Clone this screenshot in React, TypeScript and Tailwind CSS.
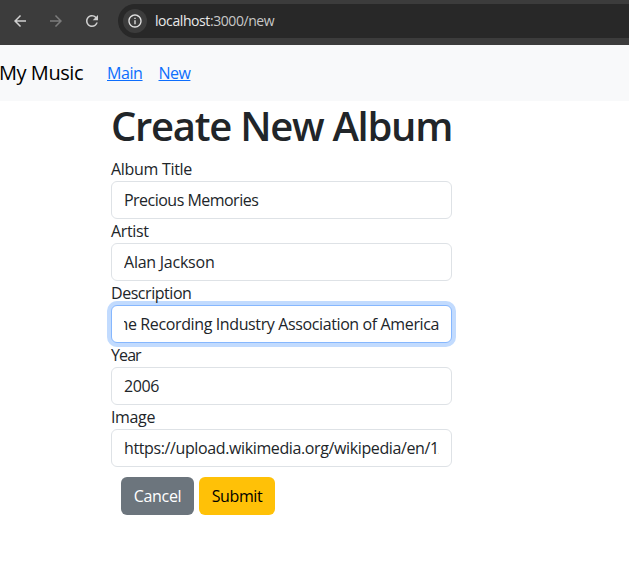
import { MdArrowBack, MdArrowForward, MdInfoOutline, MdRefresh } from "react-icons/md";

const fieldBase =
  "block h-[38px] w-full rounded-md border bg-white px-3 py-1.5 text-base text-[#212529] outline-none";

type FieldProps = {
  label: string;
  value: string;
  labelClass?: string;
  valueClass?: string;
};

function Field({ label, value, labelClass = "", valueClass = "" }: FieldProps) {
  return (
    <label className="block">
      <span className={`block h-6 leading-6 ${labelClass}`}>{label}</span>
      <input className={`${fieldBase} border-[#dee2e6] ${valueClass}`} defaultValue={value} />
    </label>
  );
}

function BrowserBar() {
  return (
    <header className="flex h-[45px] items-center bg-[#3c3c3c] pb-[3px] pl-[11px]">
      <MdArrowBack className="size-[18px] text-[#d0d0d0]" />
      <MdArrowForward className="ml-[18px] size-[18px] text-[#7c7c7c]" />
      <MdRefresh className="ml-[18px] size-[18px] text-[#d0d0d0]" />
      <div className="ml-[17px] flex h-[34px] flex-1 items-center rounded-l-full bg-[#282828] pl-[5px]">
        <span className="flex size-6 items-center justify-center rounded-full bg-[#3c3c3c]">
          <MdInfoOutline className="size-4 text-[#e3e3e3]" />
        </span>
        <span className="ml-2 text-sm tracking-[-0.42px] text-[#c7c7c7]">
          <span className="text-[#e8e8e8]">localhost</span>:3000/new
        </span>
      </div>
    </header>
  );
}

export default function App() {
  return (
    <div className="h-[568px] w-full overflow-hidden bg-white font-['Open_Sans','Noto_Sans',sans-serif] text-base font-[370] text-[#212529]">
      <BrowserBar />
      <nav className="flex h-14 items-center bg-[#f8f9fa]">
        <span className="-ml-px w-[108px] text-xl tracking-[-0.45px] text-black">My Music</span>
        <a className="w-[51.5px] tracking-[-0.4px] text-[#0d6efd] underline" href="#main">Main</a>
        <a className="tracking-[-0.5px] text-[#0d6efd] underline" href="#new">New</a>
      </nav>
      <main className="ml-[111px] w-[341px]">
        <h1 className="mb-[7px] pt-px text-[40px] leading-[48px] font-[590] tracking-[-1.28px] whitespace-nowrap">
          Create New Album
        </h1>
        <form>
          <Field label="Album Title" value="Precious Memories" labelClass="tracking-[-0.3px]" valueClass="tracking-[-0.52px]" />
          <Field label="Artist" value="Alan Jackson" labelClass="tracking-[-0.35px]" valueClass="tracking-[-0.24px]" />
          <div>
            <span className="block h-6 leading-6 tracking-[-0.45px]">Description</span>
            <div className={`${fieldBase} border-[#86b7fe] shadow-[0_0_0_4px_#c2dbfe]`}>
              <div className="flex h-6 justify-end overflow-hidden leading-6 tracking-[-0.38px] whitespace-nowrap">
                he Recording Industry Association of America
              </div>
            </div>
          </div>
          <Field label="Year" value="2006" labelClass="tracking-[-0.9px]" valueClass="tracking-[-0.4px]" />
          <Field label="Image" value="https://upload.wikimedia.org/wikipedia/en/1/" labelClass="tracking-[-0.35px]" valueClass="tracking-[-0.38px]" />
          <div className="mt-2.5 ml-2.5 flex gap-[5px]">
            <button type="button" className="h-[38px] w-[73px] rounded-md bg-[#6c757d] tracking-[-0.3px] text-white">Cancel</button>
            <button type="button" className="h-[38px] w-[76px] rounded-md bg-[#ffc107] tracking-[-0.4px] text-black">Submit</button>
          </div>
        </form>
      </main>
    </div>
  );
}
